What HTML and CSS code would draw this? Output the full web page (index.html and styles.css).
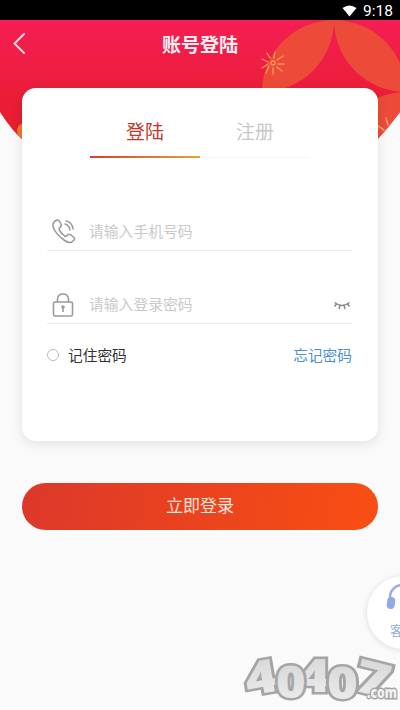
FILE: index.html
```html
<!DOCTYPE html>
<html lang="zh-CN">
<head>
<meta charset="utf-8">
<title>账号登陆</title>
<link rel="stylesheet" href="styles.css">
</head>
<body>
<div class="page">
<div class="status">
  <svg width="15" height="12" viewBox="0 0 15 12"><path d="M0.500 3Q7.500-2 14.500 3L7.500 11.500Z" fill="#fff"/></svg>
  <span>9:18</span>
</div>
<svg class="backdrop" width="400" height="140" viewBox="0 20 400 140">
  <defs>
    <linearGradient id="red" x1="0" y1="0" x2="0" y2="1"><stop offset="0" stop-color="#f41e53"/><stop offset="1" stop-color="#e61d28"/></linearGradient>
    <clipPath id="sheet"><path d="M0 20H400V112Q389 127 376 141Q200 180 24 141Q12 131 0 112Z"/></clipPath>
  </defs>
  <g clip-path="url(#sheet)">
    <rect y="20" width="400" height="120" fill="url(#red)"/>
    <g fill="#eb4b38">
      <path d="M334 20A72 72 0 0 0 262 92A72 72 0 0 0 334 20Z"/>
      <path d="M334 20A72 72 0 0 1 406 92A72 72 0 0 1 334 20Z"/>
      <path d="M406 92A72 72 0 0 0 334 164A72 72 0 0 0 406 92Z"/>
    </g>
    <circle cx="25" cy="131" r="8" fill="#ee7830"/>
    <g fill="none" stroke="#fa9c58" stroke-width="1.300" stroke-linecap="round">
      <circle cx="273" cy="63" r="2"/>
      <path d="M274 58L275 52M277 60L283 56M278 64L284 64M277 67L282 71M273 68V74M269 66L266 73M268 64L262 68M268 62L262 59M270 58L267 53"/>
      <path d="M388 125L386 118M384 130L378 126" stroke-width="1.600"/>
    </g>
  </g>
</svg>
<header class="bar">
  <svg class="back" width="14" height="24" viewBox="0 0 14 24"><path d="M12 3L2.500 12.500L12 22" fill="none" stroke="#ffdbe5" stroke-width="2" stroke-linecap="round"/></svg>
  <h1>账号登陆</h1>
</header>
<main>
  <section class="card">
    <nav class="tabs"><span class="tab active">登陆</span><span class="tab">注册</span></nav>
    <div class="field phone">
      <svg width="26" height="28" viewBox="0 -1 26 28" fill="none" stroke="#9b9b9b" stroke-width="1.600" stroke-linecap="round" stroke-linejoin="round">
        <path d="M5 2.500Q8 1 10 6Q11 8 8.500 10Q7.500 11 9 13Q11 16 13.500 18Q15 19 16.500 17Q18 15.500 20 17L23 19.500Q24.500 21 22 23Q19 26.500 13 22Q6 17 3 11Q0 5 5 2.500Z"/><path d="M15 3Q21 4 22 11M14 6Q18 7 19 12" stroke-width="1.500"/>
      </svg>
      <span>请输入手机号码</span>
    </div>
    <div class="field password">
      <svg width="26" height="28" viewBox="0 -2 26 28" fill="none" stroke="#9b9b9b" stroke-width="1.600" stroke-linejoin="round">
        <rect x="2.500" y="10" width="19" height="14" rx="1.500"/><path d="M6.500 10V7Q7 2 12 2Q17 2 17.500 7V10M12 15V20"/><circle cx="12" cy="15" r="1" fill="#9b9b9b"/>
      </svg>
      <span>请输入登录密码</span>
      <svg class="eye" width="18" height="10" viewBox="0 0 18 10" fill="none" stroke="#888" stroke-width="1.500"><path d="M1.500 1.500Q9 7.500 16.500 1.500M3.500 3L1.500 5.500M7 4.500L6 8M11 4.500L12 8M14.500 3L16.500 5.500"/></svg>
    </div>
    <div class="options"><i class="radio"></i><span>记住密码</span><a>忘记密码</a></div>
  </section>
  <div class="submit">立即登录</div>
</main>
<aside class="service">
  <svg width="34" height="28" viewBox="0 0 34 28"><path d="M4 16V13A12 12 0 0 1 28 13V16" fill="none" stroke="#9aafe4" stroke-width="2.500"/><rect x="1" y="13" width="8" height="12" rx="4" fill="#92a9e3" transform="rotate(8 5 19)"/><rect x="24" y="13" width="8" height="12" rx="4" fill="#92a9e3"/></svg>
  <span>客服</span>
</aside>
<svg class="mark" width="164" height="56" viewBox="236 652 164 56">
  <defs><linearGradient id="silver" x1="0" y1="0" x2="0" y2="1"><stop offset="0" stop-color="#d2d2d2"/><stop offset="1" stop-color="#f0f0f0"/></linearGradient></defs>
  <g class="digits">
    <text transform="translate(248 696) rotate(-10) scale(1.200 1)" font-size="46">4</text>
    <text transform="translate(298 692) scale(1.200 1)" font-size="46">4</text>
    <text transform="translate(352 690) rotate(14) scale(1.300 1)" font-size="46">7</text>
    <text transform="translate(276 698) scale(1.150 1)" font-size="44">0</text>
    <text transform="translate(327 699) scale(1.200 1)" font-size="44">0</text>
  </g>
  <text class="com" x="367" y="698" textLength="30" lengthAdjust="spacingAndGlyphs">.com</text>
</svg>
</div>
</body>
</html>
```
FILE: styles.css
```css
* { box-sizing: border-box; }
body { margin: 0; }
.page {
  position: relative;
  width: 400px;
  height: 710px;
  overflow: hidden;
  background: #fafafa;
  font-family: Roboto, "Noto Sans CJK SC", sans-serif;
}
svg { display: block; flex: none; }
.status {
  height: 20px;
  background: #000;
  color: #fff;
  display: flex;
  align-items: center;
  justify-content: flex-end;
  gap: 6px;
  padding: 2px 7px 0 0;
  font-size: 15.5px;
}
.backdrop { position: absolute; left: 0; top: 20px; }
.bar {
  position: relative;
  height: 68px;
  padding-bottom: 17px;
  display: flex;
  align-items: center;
  justify-content: center;
}
.back { position: absolute; left: 12px; top: 11px; }
h1 { margin: 1px 0 0; color: #fff0f4; font-size: 19px; line-height: 28px; font-weight: 700; }
main { position: relative; padding: 0 22px; }
.card {
  height: 353px;
  border-radius: 14px;
  background: #fff;
  box-shadow: 0 3px 12px rgba(0, 0, 0, .1);
  padding: 20px 26px 0 25px;
}
.tabs { display: flex; margin: 0 42px 0 43px; height: 50px; }
.tab {
  flex: 1;
  text-align: center;
  font-size: 19px;
  line-height: 50px;
  color: #c8c8c8;
  height: 50px;
  border-bottom: 1px solid #f4f4f4;
}
.active {
  color: #ca3428;
  border-bottom: 2px solid;
  border-image: linear-gradient(90deg, #d6402c, #e8a03b) 1;
}
.field {
  display: flex;
  align-items: center;
  border-bottom: 1px solid #ececec;
  color: #c9c9c9;
  font-size: 14.8px;
  padding-left: 4px;
  gap: 12px;
}
.phone { height: 40px; margin-top: 53px; }
.password { height: 40px; margin-top: 33px; }
.eye { margin: 4px 1px 0 auto; }
.options { display: flex; align-items: center; height: 62px; font-size: 14.7px; color: #333; }
.options span, .options a { margin-top: -2px; }
.radio { width: 12px; height: 12px; border: 1px solid #bbb; border-radius: 50%; margin-right: 9px; }
.options a { margin-left: auto; color: #4a90ce; }
.submit {
  margin-top: 42px;
  height: 47px;
  border-radius: 24px;
  background: linear-gradient(100deg, #dc382b, #f94e12);
  color: #ffe6dc;
  text-align: center;
  font-size: 17px;
  line-height: 46px;
}
.service {
  position: absolute;
  left: 367px;
  top: 576px;
  width: 73px;
  height: 73px;
  border-radius: 50%;
  background: #fff;
  box-shadow: 0 1px 6px rgba(0, 0, 0, .13);
  padding: 8px 0 0 19px;
  color: #92b0e0;
  font-size: 13px;
}
.service span { display: block; line-height: 20px; margin: 9px 0 0 4px; }
.mark { position: absolute; left: 236px; top: 652px; overflow: visible; }
.digits { font-family: "Open Sans", sans-serif; font-weight: 800; fill: url(#silver); stroke: #a5a5a5; stroke-width: 5px; paint-order: stroke; }
.com { font: 800 15px "Open Sans", sans-serif; fill: #f1f1f1; stroke: #a5a5a5; stroke-width: 3px; paint-order: stroke; }
```
